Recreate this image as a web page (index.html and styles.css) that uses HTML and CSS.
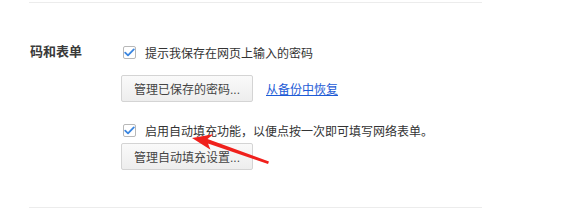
FILE: index.html
```html
<!DOCTYPE html>
<html lang="zh-CN">
<head>
    <meta charset="UTF-8">
    <title>密码和表单</title>
    <link rel="stylesheet" href="styles.css">
</head>
<body>

    <div class="settings">
        <div class="divider"></div>

        <div class="section">
            <div class="section-title">码和表单</div>
            <div class="section-body">
                <label class="check-row">
                    <span class="checkbox">
                        <svg width="11" height="9" viewBox="0 0 11 9"><path d="M1.2 4.6 L4 7.4 L9.8 1.4" fill="none" stroke="#3b86e0" stroke-width="1.8" stroke-linecap="round" stroke-linejoin="round"/></svg>
                    </span>
                    提示我保存在网页上输入的密码
                </label>
                <div class="button-row first">
                    <button class="btn">管理已保存的密码...</button>
                    <a class="link" href="#">从备份中恢复</a>
                </div>

                <label class="check-row second">
                    <span class="checkbox">
                        <svg width="11" height="9" viewBox="0 0 11 9"><path d="M1.2 4.6 L4 7.4 L9.8 1.4" fill="none" stroke="#3b86e0" stroke-width="1.8" stroke-linecap="round" stroke-linejoin="round"/></svg>
                    </span>
                    启用自动填充功能，以便点按一次即可填写网络表单。
                </label>
                <div class="button-row tight">
                    <button class="btn">管理自动填充设置...</button>
                </div>
            </div>
        </div>

        <div class="divider"></div>
    </div>

    <!-- annotation arrow drawn over the page -->
    <svg class="arrow" width="577" height="224" viewBox="0 0 577 224">
        <path d="M268 164 L208 143.5 L210.5 149.8 L192 138 L213.5 134.2 L207.5 139 L269 161.5 Z" fill="#f0201c"/>
    </svg>

</body>
</html>
```

FILE: styles.css
```css
body {
    margin: 0;
    background-color: #ffffff;
    font-family: "Liberation Sans", "Noto Sans CJK SC", sans-serif;
    font-size: 12px;
    color: #333333;
}

.settings {
    margin-left: 29px;
    width: 453px;
    padding-top: 2px;
}

.divider {
    height: 1px;
    background-color: #ececec;
}

.section {
    display: flex;
    padding-top: 39px;
    padding-bottom: 37px;
}

.section-title {
    width: 91px;
    padding-left: 1px;
    line-height: 20px;
    font-size: 13px;
    font-weight: bold;
    color: #3a3a3a;
}

.section-body {
    display: flex;
    flex-direction: column;
    align-items: flex-start;
}

.check-row {
    display: flex;
    align-items: center;
    height: 20px;
    color: #333333;
}

.check-row.second {
    margin-top: 18px;
}

.checkbox {
    width: 11px;
    height: 11px;
    border: 1px solid #b8b8b8;
    border-radius: 2px;
    background-color: #ffffff;
    display: flex;
    align-items: center;
    justify-content: center;
    margin-left: 2px;
    margin-right: 9px;
}

.button-row {
    display: flex;
    align-items: center;
}

.button-row.first {
    margin-top: 13px;
}

.button-row.tight {
    margin-top: 3px;
}

.btn {
    height: 27px;
    width: 132px;
    padding: 0;
    border: 1px solid #d4d4d4;
    border-radius: 2px;
    background: linear-gradient(#fafafa, #ededed);
    font-family: "Liberation Sans", "Noto Sans CJK SC", sans-serif;
    font-size: 12px;
    color: #444444;
}

.link {
    margin-left: 13px;
    color: #1d5bd6;
    text-decoration: underline;
}

.arrow {
    position: absolute;
    left: 0;
    top: 0;
    pointer-events: none;
}
```
